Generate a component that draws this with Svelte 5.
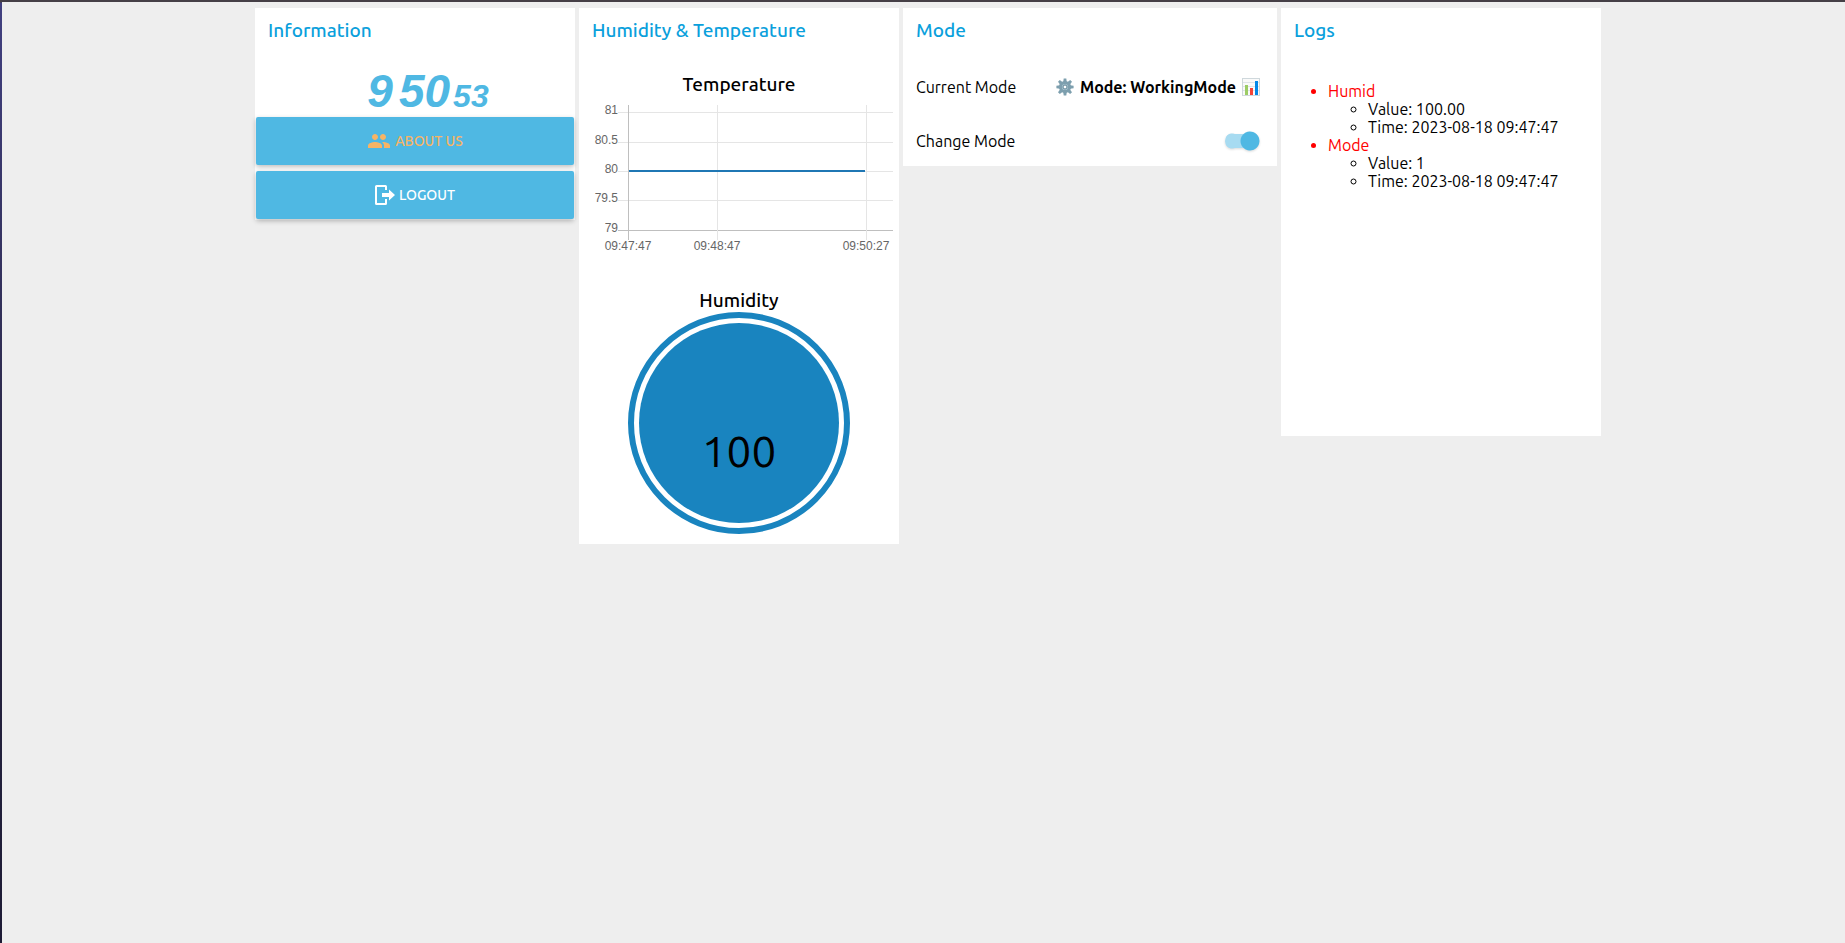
<script>
  const clock = { hours: '9', minutes: '50', seconds: '53' };
  let working = $state(true);

  const yTicks = [
    { label: '81', y: 49 },
    { label: '80.5', y: 79 },
    { label: '80', y: 108 },
    { label: '79.5', y: 137 },
    { label: '79', y: 167 }
  ];
  const xTicks = [
    { label: '09:47:47', x: 48 },
    { label: '09:48:47', x: 137 },
    { label: '09:50:27', x: 286 }
  ];
  const teeth = [0, 45, 90, 135, 180, 225, 270, 315];

  const logs = [
    { name: 'Humid', value: '100.00', time: '2023-08-18 09:47:47' },
    { name: 'Mode', value: '1', time: '2023-08-18 09:47:47' }
  ];
</script>

<main>
  <section class="card">
    <h2>Information</h2>
    <div class="clock">
      <span class="hours">{clock.hours}</span>
      <span class="minutes">{clock.minutes}</span>
      <span class="seconds">{clock.seconds}</span>
    </div>
    <button class="action about">
      <svg width="24" height="24" viewBox="0 0 24 24" fill="currentColor" aria-hidden="true">
        <path d="M16 11c1.66 0 2.99-1.34 2.99-3S17.660 5 16 5s-3 1.340-3 3 1.340 3 3 3zm-8 0c1.660 0 2.990-1.340 2.990-3S9.660 5 8 5 5 6.340 5 8s1.340 3 3 3zm0 2c-2.330 0-7 1.170-7 3.500V19h14v-2.500C15 14.170 10.330 13 8 13zm8 0c-.290 0-.620.020-.970.050 1.160.840 1.970 1.970 1.970 3.450V19h6v-2.500c0-2.330-4.670-3.500-7-3.500z" />
      </svg>
      <span>About us</span>
    </button>
    <button class="action">
      <svg width="20" height="20" viewBox="0 0 20 20" aria-hidden="true">
        <path d="M11 5V1.500Q11 1 10.500 1H1.500Q1 1 1 1.500v17q0 .500.500.500h9q.500 0 .500-.500V14" fill="none" stroke="currentColor" stroke-width="2" />
        <path d="M7 8h7V4.500L20 10l-6 5.500V12H7z" fill="currentColor" />
      </svg>
      <span>Logout</span>
    </button>
  </section>

  <section class="card">
    <h2>Humidity &amp; Temperature</h2>
    <div class="chart">
      <svg viewBox="0 0 318 210" role="img" aria-label="Temperature">
        <text class="title" x="159" y="28">Temperature</text>
        <g class="grid">
          {#each yTicks as tick}
            <line x1="38" x2="313" y1={tick.y + 0.5} y2={tick.y + 0.5} class:axis={tick.label === '79'} />
          {/each}
          {#each xTicks as tick, i}
            <line x1={tick.x + 0.5} x2={tick.x + 0.5} y1="42" y2="177" class:axis={i === 0} />
          {/each}
        </g>
        <line class="series" x1="49" x2="285" y1="108" y2="108" />
        {#each yTicks as tick}
          <text class="tick end" x="38" y={tick.y + 2}>{tick.label}</text>
        {/each}
        {#each xTicks as tick}
          <text class="tick" x={tick.x} y="187">{tick.label}</text>
        {/each}
      </svg>
    </div>
    <div class="chart">
      <svg viewBox="0 0 318 264" role="img" aria-label="Humidity 100">
        <text class="title" x="159" y="28">Humidity</text>
        <circle class="ring" cx="159" cy="144" r="108" />
        <circle class="liquid" cx="159" cy="144" r="100" />
        <text class="level" x="159" y="188">100</text>
      </svg>
    </div>
  </section>

  <section class="card wide">
    <h2>Mode</h2>
    <div class="row">
      <span>Current Mode</span>
      <span class="mode">
        <svg width="18" height="18" viewBox="0 0 18 18" aria-hidden="true">
          {#each teeth as angle}
            <path d="M7.200 4L7.700.400h2.600L10.800 4z" fill="#7d9fae" transform="rotate({angle} 9 9)" />
          {/each}
          <circle cx="9" cy="9" r="4.600" fill="#a9c4cf" stroke="#7d9fae" stroke-width="3" />
          <circle cx="9" cy="9" r="2" fill="#fff" stroke="#5f8596" stroke-width="1" />
        </svg>
        <b>Mode: WorkingMode</b>
        <svg width="18" height="18" viewBox="0 0 18 18" aria-hidden="true">
          <rect x=".5" y=".5" width="17" height="17" fill="#fafafa" stroke="#cfd8dc" />
          <path d="M1 4.500h16M1 8.500h16M1 12.500h16" stroke="#dfe5e8" />
          <rect x="3" y="7" width="3" height="10" fill="#9ccc65" />
          <rect x="8" y="10" width="3" height="7" fill="#f44336" />
          <rect x="13" y="3" width="3" height="14" fill="#0288e8" />
        </svg>
      </span>
    </div>
    <div class="row">
      <label for="mode-switch">Change Mode</label>
      <input id="mode-switch" class="switch" type="checkbox" bind:checked={working} />
    </div>
  </section>

  <section class="card">
    <h2>Logs</h2>
    <div class="logs">
      <ul>
        {#each logs as log}
          <li class="entry">
            {log.name}
            <ul>
              <li>Value: {log.value}</li>
              <li>Time: {log.time}</li>
            </ul>
          </li>
        {/each}
      </ul>
    </div>
  </section>
</main>

<style>
  :global(body) {
    margin: 0;
    background: #eee;
  }

  main {
    box-sizing: border-box;
    min-height: 100vh;
    display: flex;
    justify-content: center;
    align-items: flex-start;
    gap: 4px;
    padding: 6px 0 0 9px;
    border-top: 2px solid #453f46;
    border-left: 2px solid;
    border-image: linear-gradient(#453f46 2px, #414080 3px, #2a2745 50%, #1d1b35) 2;
    background: linear-gradient(#453f46, #453f46) top / 100% 2px no-repeat border-box #eee;
    font: 16px/18px Ubuntu, "Noto Sans", sans-serif;
    color: #000;
  }

  .card {
    box-sizing: border-box;
    width: 320px;
    display: grid;
    gap: 6px;
    padding: 0 1px 1px;
    background: #fff;
  }

  .wide {
    width: 374px;
  }

  h2 {
    margin: 0;
    padding: 10px 12px 15px;
    font-size: 19px;
    line-height: 24px;
    font-weight: 500;
    color: #0aa0dc;
  }

  .clock {
    height: 48px;
    display: flex;
    justify-content: center;
    align-items: baseline;
    padding-left: 26px;
    color: #4fb8e3;
    font: italic bold 46px/56px "Liberation Sans", sans-serif;
  }

  .minutes {
    margin: 0 3px 0 6px;
  }

  .seconds {
    font-size: 32px;
  }

  .action {
    height: 48px;
    display: flex;
    justify-content: center;
    align-items: center;
    gap: 4px;
    padding: 0;
    border: 0;
    border-radius: 2px;
    background: #4fb8e3;
    box-shadow: 0 2px 5px rgba(0, 0, 0, 0.26);
    color: #fff;
    font: 500 14px/20px Ubuntu, "Noto Sans", sans-serif;
    text-transform: uppercase;
    cursor: pointer;
  }

  .about {
    color: #f7b465;
  }

  .chart svg {
    display: block;
    width: 100%;
  }

  .title {
    font-size: 19px;
    font-weight: 500;
    text-anchor: middle;
  }

  .grid line {
    stroke: #e5e5e5;
  }

  .grid .axis {
    stroke: #bfbfbf;
  }

  .series {
    stroke: #1f77b4;
    stroke-width: 2;
  }

  .tick {
    font: 12px "Liberation Sans", sans-serif;
    fill: #666;
    text-anchor: middle;
  }

  .end {
    text-anchor: end;
  }

  .ring {
    fill: none;
    stroke: #1984bf;
    stroke-width: 6;
  }

  .liquid {
    fill: #1984bf;
  }

  .level {
    font-size: 44px;
    text-anchor: middle;
  }

  .row {
    height: 48px;
    display: flex;
    justify-content: space-between;
    align-items: center;
    padding: 0 16px 0 12px;
  }

  .mode {
    display: flex;
    align-items: center;
    gap: 6px;
  }

  .switch {
    appearance: none;
    width: 35px;
    height: 20px;
    margin: 0;
    background:
      radial-gradient(circle at 10px 10px, #b4b4b4 10px, transparent 10px),
      linear-gradient(#ddd, #ddd) 0 3px / 30px 14px no-repeat;
    border-radius: 10px;
    cursor: pointer;
  }

  .switch:checked {
    background:
      radial-gradient(circle at 25px 10px, #4fb8e3 9px, transparent 10px),
      linear-gradient(90deg, #a7dbf1, #a7dbf1) 7px 3px / 20px 14px no-repeat,
      radial-gradient(circle at 7px 10px, #a7dbf1 7px, transparent 8px);
    filter: drop-shadow(0 1px 1px rgba(0, 0, 0, 0.15));
  }

  .logs {
    box-sizing: border-box;
    min-height: 372px;
    padding: 19px 6px;
  }

  ul {
    margin: 0;
    padding-left: 40px;
  }

  .entry {
    color: #f00;
  }

  .entry li {
    color: #000;
  }
</style>
